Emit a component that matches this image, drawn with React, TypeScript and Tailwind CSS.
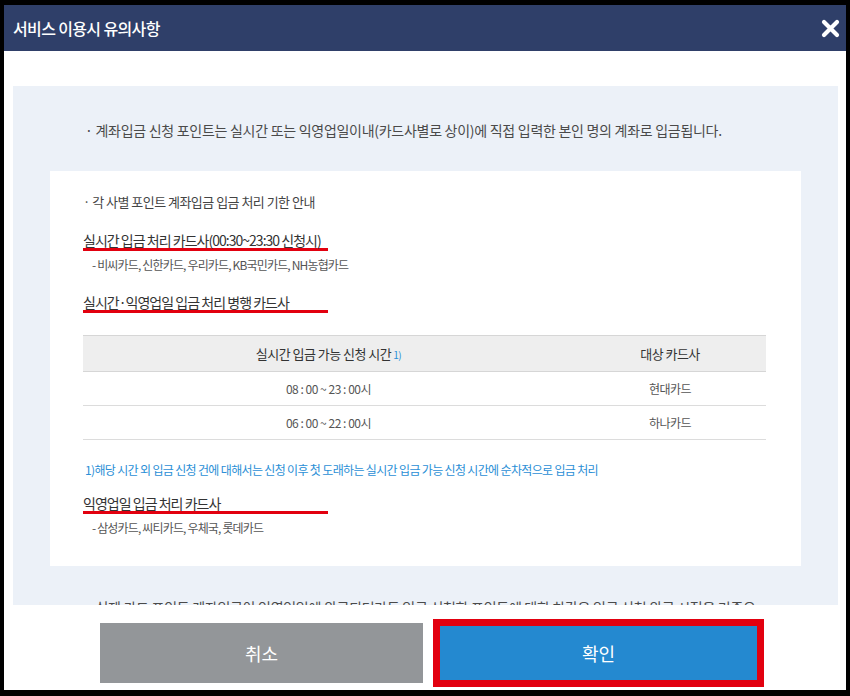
import React from "react";

const font = "font-['Noto_Sans_CJK_KR','Noto_Sans',sans-serif]";

function RedUnderline() {
  return <div className="h-[3px] w-[245px] bg-[#e2000f]" />;
}

function CloseIcon() {
  return (
    <svg width="19" height="19" viewBox="0 0 19 19" aria-hidden>
      <path d="M3 3 L16 16 M16 3 L3 16" stroke="white" strokeWidth="4.2" strokeLinecap="round" />
    </svg>
  );
}

export default function App() {
  const rows = [
    { time: "08 : 00 ~ 23 : 00시", card: "현대카드" },
    { time: "06 : 00 ~ 22 : 00시", card: "하나카드" },
  ];

  return (
    <div className={`w-[850px] h-[696px] bg-black pt-[5px] px-[4px] pb-[6px] ${font}`}>
      <div className="flex h-full flex-col bg-white">
        {/* header */}
        <div className="flex h-[46px] shrink-0 items-center justify-between bg-[#2f3f69] pl-[9px] pr-[6px]">
          <h1 className="text-[16px] font-medium tracking-[-0.04em] text-white">서비스 이용시 유의사항</h1>
          <CloseIcon />
        </div>

        {/* scrolling body */}
        <div className="h-[554px] shrink-0 overflow-hidden pt-[35px] pl-[9px] pr-[8px]">
          <div className="bg-[#ecf1f8] px-[72px] pt-[34px] pb-[40px]">
            <p className="text-[14px] leading-[20px] tracking-[-0.02em] text-[#4a4a4a]">
              · 계좌입금 신청 포인트는 실시간 또는 익영업일이내(카드사별로 상이)에 직접 입력한 본인 명의 계좌로 입금됩니다.
            </p>

            <div className="-mx-[35px] mt-[31px] bg-white pl-[33px] pr-[35px] pt-[22px] pb-[30px]">
              <p className="text-[13px] leading-[18px] tracking-[-0.04em] text-[#444]">· 각 사별 포인트 계좌입금 입금 처리 기한 안내</p>

              <div className="mt-[21px] text-[14px] leading-[16px] tracking-[-0.07em] text-[#333]">실시간 입금 처리 카드사(00:30~23:30 신청시)</div>
              <RedUnderline />
              <p className="mt-[6px] pl-[9px] text-[12px] leading-[16px] tracking-[-0.07em] text-[#555]">- 비씨카드, 신한카드, 우리카드, KB국민카드, NH농협카드</p>

              <div className="mt-[21px] text-[14px] leading-[16px] tracking-[-0.07em] text-[#333]">실시간·익영업일 입금 처리 병행 카드사</div>
              <RedUnderline />

              <table className="mt-[22px] w-full border-collapse text-center">
                <thead>
                  <tr className="h-[36px] border-t border-b border-[#d6d6d6] bg-[#eeeeee]">
                    <th className="w-[491px] text-[13px] font-normal tracking-[-0.04em] text-[#333]">
                      실시간 입금 가능 신청 시간<span className="ml-[2px] text-[10px] text-[#2b8fd6]">1)</span>
                    </th>
                    <th className="text-[13px] font-normal tracking-[-0.04em] text-[#333]">대상 카드사</th>
                  </tr>
                </thead>
                <tbody>
                  {rows.map((r) => (
                    <tr key={r.card} className="h-[34px] border-b border-[#dcdcdc] text-[12px] tracking-[-0.04em] text-[#555]">
                      <td>{r.time}</td>
                      <td>{r.card}</td>
                    </tr>
                  ))}
                </tbody>
              </table>

              <p className="mt-[22px] pl-[2px] text-[12px] leading-[16px] tracking-[-0.055em] text-[#2b8fd6]">
                1)해당 시간 외 입금 신청 건에 대해서는 신청 이후 첫 도래하는 실시간 입금 가능 신청 시간에 순차적으로 입금 처리
              </p>

              <div className="mt-[17px] text-[14px] leading-[16px] tracking-[-0.07em] text-[#333]">익영업일 입금 처리 카드사</div>
              <RedUnderline />
              <p className="mt-[6px] pl-[9px] text-[12px] leading-[16px] tracking-[-0.07em] text-[#555]">- 삼성카드, 씨티카드, 우체국, 롯데카드</p>
            </div>

            <p className="mt-[31px] text-[14px] leading-[20px] tracking-[-0.02em] text-[#4a4a4a]">
              · 실제 카드 포인트 계좌입금이 익영업일에 완료되더라도 입금 신청한 포인트에 대한 차감은 입금 신청 완료 시점을 기준으로 합니다.
            </p>
          </div>
        </div>

        {/* buttons */}
        <div className="flex flex-1 items-start gap-[14px] pl-[96px] pt-[18px]">
          <button className="h-[60px] w-[323px] bg-[#939699] text-[18px] text-white">취소</button>
          <button className="h-[60px] w-[323px] bg-[#2489d0] text-[18px] text-white shadow-[0_0_0_4px_#e2000f,inset_0_0_0_3px_#e2000f]">확인</button>
        </div>
      </div>
    </div>
  );
}
